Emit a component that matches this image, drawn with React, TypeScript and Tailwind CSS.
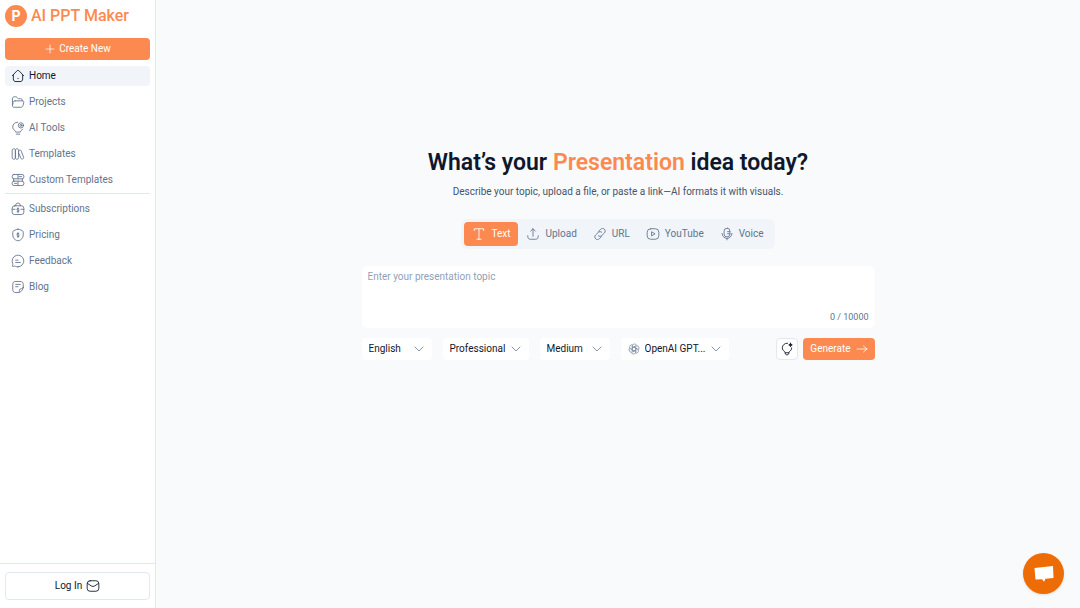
import { useState } from "react";
import type { ReactNode } from "react";

const Icon = ({
  children,
  className = "size-[14px]",
}: {
  children: ReactNode;
  className?: string;
}) => (
  <svg
    viewBox="0 0 24 24"
    fill="none"
    stroke="currentColor"
    strokeWidth="1.5"
    strokeLinecap="round"
    strokeLinejoin="round"
    className={`shrink-0 ${className}`}
    aria-hidden="true"
  >
    {children}
  </svg>
);

const dollar = (
  <path d="M12 8v8M14 10c-.4-.6-1.100-.9-2-.9-1.200 0-2 .6-2 1.500s.9 1.400 2 1.400 2 .5 2 1.400-.8 1.500-2 1.500c-.9 0-1.600-.3-2-.9" />
);

const mainLinks = [
  {
    name: "Home",
    icon: (
      <>
        <path d="M2.500 11.500 9.500 3.800c1.700-1.800 3.300-1.800 5 0l7 7.700M4 10.500V17c0 3 1.500 4.500 4.500 4.500h7c3 0 4.500-1.500 4.500-4.500v-6.500" />
        <path d="M12 16v.5" />
      </>
    ),
  },
  {
    name: "Projects",
    icon: (
      <>
        <path d="M2.500 17V7c0-2.500 1-4 3.500-4h2c1 0 1.700.5 2.300 1.300l.7 1c.5.700 1 1 1.900 1H16c2.500 0 3.500 1.200 3.500 3.700" />
        <path d="M7 10h12.500c2.200 0 2.900 1.200 2.400 3l-1.300 5c-.5 2-1.500 3-3.600 3H5.500c-2.300 0-3.400-1.300-2.900-3.500l1-4.500C4.100 11 5 10 7 10z" />
      </>
    ),
  },
  {
    name: "AI Tools",
    icon: (
      <>
        <path d="M11.500 2C6.500 2 3 5.600 3 10c0 3.300 1.600 5 3.600 6.500.9.600 1.400 1.300 1.400 2.500h8c0-1.200.5-1.900 1.400-2.500 1-.8 1.900-1.600 2.600-2.600M9 22.500h6" />
        <circle cx="17" cy="7.500" r="4.500" />
        <circle cx="17" cy="7.500" r="1.800" />
      </>
    ),
  },
  {
    name: "Templates",
    icon: (
      <>
        <path d="M2 6c0-2 .8-3 2.700-3S7.500 4 7.500 6v12c0 2-.9 3-2.800 3S2 20 2 18zM7.500 6c0-2 .9-3 2.800-3S13 4 13 6v12c0 2-.8 3-2.700 3s-2.800-1-2.800-3z" />
        <path d="M13 8c0-1.500.5-2.200 1.800-2.600 1.500-.4 2.300.2 2.800 1.800l3.900 10c.5 1.700 0 2.800-1.500 3.300s-2.500 0-3.100-1.600L13 10" />
      </>
    ),
  },
  {
    name: "Custom Templates",
    icon: (
      <>
        <rect x="2" y="2.500" width="20" height="7.500" rx="3" />
        <rect x="2" y="14" width="20" height="7.500" rx="3" />
        <path d="M14 6.200h4M6 17.800h4M12 2.500V10M12 14v7.500M4.500 10v4M19.500 10v4" />
      </>
    ),
  },
];

const moreLinks = [
  {
    name: "Subscriptions",
    icon: (
      <>
        <rect x="2" y="6.500" width="20" height="15" rx="4" />
        <path d="M8 6.500C8 3.500 9 2 12 2s4 1.500 4 4.500M2 12.500h5M17 12.500h5" />
        <g transform="translate(0 2)">{dollar}</g>
      </>
    ),
  },
  {
    name: "Pricing",
    icon: (
      <>
        <path d="M12 2c1.500 0 3 .9 5.300 1.700C20 4.600 21 5.300 21 8v4c0 5.500-4 8.200-6.700 9.400-1.600.8-3 .8-4.600 0C7 20.200 3 17.500 3 12V8c0-2.700 1-3.400 3.700-4.300C9 2.900 10.500 2 12 2z" />
        {dollar}
      </>
    ),
  },
  {
    name: "Feedback",
    icon: (
      <>
        <path d="M12 22a10 10 0 1 0-9-5.600c.2.400.3.900.2 1.400l-.7 2.400c-.2.900.3 1.400 1.200 1.200l2.400-.6c.5-.1.900 0 1.400.2 1.400.7 2.900 1 4.500 1z" />
        <path d="M8 10.500h4M8 14.500h8" />
      </>
    ),
  },
  {
    name: "Blog",
    icon: (
      <>
        <path d="M21 13V8c0-4-1.500-5.500-5.500-5.500h-7C4.500 2.500 3 4 3 8v8c0 4 1.500 5.500 5.500 5.500H13c3 0 8-4.500 8-8.500zM21 13c-1 2-2.500 2-4 2s-2.500 1-2.500 2.500 0 3-1.500 4" />
        <path d="M8 7.500h8M8 11.500h4" />
      </>
    ),
  },
];

const tabs = [
  {
    name: "Text",
    icon: <path d="M4 6V3h16v3M12 3v18M8.500 21h7" />,
  },
  {
    name: "Upload",
    icon: (
      <path d="M12 16V3M8 7l4-4 4 4M3 15c0 4.500 1 6 5 6h8c4 0 5-1.500 5-6" />
    ),
  },
  {
    name: "URL",
    icon: (
      <>
        <path d="m9.500 7.500 3.300-3.300c2.100-2.100 4.800-2.300 6.500-.6 1.900 1.900 2.300 4.600.2 6.700l-4.300 4.200c-2 2-4.600 2-6.200.5" />
        <path d="m14.500 16.500-3.300 3.300c-2.100 2.100-4.800 2.300-6.500.6-1.900-1.900-2.300-4.600-.2-6.700l4.300-4.200c2-2 4.600-2 6.200-.5" />
      </>
    ),
  },
  {
    name: "YouTube",
    icon: (
      <>
        <rect x="2" y="3" width="20" height="18" rx="6" />
        <path d="M9.500 8.800v6.400l5.500-3.200z" />
      </>
    ),
  },
  {
    name: "Voice",
    icon: (
      <>
        <rect x="7" y="2" width="10" height="15" rx="5" />
        <path d="M3.500 11a8.500 8.500 0 0 0 17 0M12 19.500V22M13 8h4M13 11.500h4" />
      </>
    ),
  },
];

const SideLink = ({
  name,
  icon,
  active,
}: {
  name: string;
  icon: ReactNode;
  active?: boolean;
}) => (
  <a
    href="#"
    className={
      active
        ? "flex h-5 items-center gap-1 rounded bg-slate-100 px-[6px] text-slate-900"
        : "flex h-5 items-center gap-1 rounded px-[6px] text-slate-500"
    }
  >
    <Icon>{icon}</Icon>
    {name}
  </a>
);

const Picker = ({
  label,
  value,
  width,
  icon,
}: {
  label: string;
  value: string;
  width: string;
  icon?: ReactNode;
}) => (
  <div
    className={`relative flex h-[22px] items-center rounded bg-white ${width}`}
  >
    {icon}
    <select
      aria-label={label}
      className={`h-full w-full appearance-none bg-transparent text-slate-900 outline-none ${
        icon ? "pl-6" : "pl-[7px]"
      }`}
    >
      <option>{value}</option>
    </select>
    <Icon className="pointer-events-none absolute right-[7px] size-3 text-slate-500">
      <path d="m4 8 8 8 8-8" />
    </Icon>
  </div>
);

const App = () => {
  const [tab, setTab] = useState("Text");
  const [topic, setTopic] = useState("");

  return (
    <div className="flex min-h-screen bg-slate-50 font-[Roboto,sans-serif] text-[10px] leading-4 text-slate-500">
      {/* Sidebar */}
      <aside className="flex w-[156px] shrink-0 flex-col border-r border-slate-200 bg-white">
        <a
          href="#"
          className="mt-[5px] flex items-center gap-1 px-[5px] text-base leading-[22px] font-medium text-[#fc8a50]"
        >
          <span className="flex size-[22px] items-center justify-center rounded-full bg-[#fc8a50] font-[Inter,sans-serif] text-sm font-bold text-white">
            P
          </span>
          AI PPT Maker
        </a>

        <div className="mt-[11px] px-[5px]">
          <button className="flex h-[22px] w-full items-center justify-center gap-[3px] rounded bg-[#fc8a50] text-white">
            <Icon className="size-3">
              <path d="M12 4v16M4 12h16" />
            </Icon>
            Create New
          </button>
        </div>

        <nav className="mt-[6px] px-[5px]">
          <div className="flex flex-col gap-[6px]">
            {mainLinks.map((link) => (
              <SideLink key={link.name} {...link} active={link.name === "Home"} />
            ))}
          </div>
          <hr className="mt-[3px] mb-[5px] border-slate-200" />
          <div className="flex flex-col gap-[6px]">
            {moreLinks.map((link) => (
              <SideLink key={link.name} {...link} />
            ))}
          </div>
        </nav>

        <div className="mt-auto border-t border-slate-200 px-[5px] py-2">
          <button className="flex h-7 w-full items-center justify-center gap-1 rounded border border-slate-200 text-slate-900">
            Log In
            <Icon>
              <rect x="2" y="3" width="20" height="18" rx="5" />
              <path d="m2.500 7.500 6 4c2.500 1.600 4.500 1.600 7 0l6-4" />
            </Icon>
          </button>
        </div>
      </aside>

      {/* Generator */}
      <main className="flex flex-1 flex-col items-center px-4 pt-[147px]">
        <h1 className="text-center text-[23px] leading-8 font-semibold text-slate-900">
          What’s your <span className="text-[#fc8a50]">Presentation</span> idea
          today?
        </h1>
        <p className="mt-[5px] text-center text-slate-600">
          Describe your topic, upload a file, or paste a link—AI formats it with
          visuals.
        </p>

        <div className="mt-[19px] flex rounded-md bg-slate-100 p-[3px]">
          {tabs.map((item) => (
            <button
              key={item.name}
              onClick={() => setTab(item.name)}
              className={
                tab === item.name
                  ? "flex h-6 items-center gap-[5px] rounded bg-[#fc8a50] px-2 text-white"
                  : "flex h-6 items-center gap-[5px] rounded px-2 text-slate-500"
              }
            >
              <Icon>{item.icon}</Icon>
              {item.name}
            </button>
          ))}
        </div>

        <form
          className="mt-[17px] w-full max-w-[513px]"
          onSubmit={(e) => e.preventDefault()}
        >
          <div className="rounded-md bg-white px-[6px] py-[3px]">
            <textarea
              aria-label="Presentation topic"
              placeholder="Enter your presentation topic"
              maxLength={10000}
              value={topic}
              onChange={(e) => setTopic(e.target.value)}
              className="block h-10 w-full resize-none bg-transparent text-slate-900 outline-none placeholder:text-slate-400"
            />
            <div className="text-right text-[9px]">{topic.length} / 10000</div>
          </div>

          <div className="mt-[10px] flex gap-[11px]">
            <Picker label="Language" value="English" width="w-[70px]" />
            <Picker label="Tone" value="Professional" width="w-[86px]" />
            <Picker label="Length" value="Medium" width="w-[70px]" />
            <Picker
              label="Model"
              value="OpenAI GPT..."
              width="w-[108px]"
              icon={
                <Icon className="pointer-events-none absolute left-[7px] size-3 opacity-80">
                  {[0, 60, 120, 180, 240, 300].map((angle) => (
                    <path
                      key={angle}
                      transform={`rotate(${angle} 12 12)`}
                      d="M8.500 14V6.500a4.800 4.800 0 0 1 9-2.200M8.500 10l6.500-3.700"
                    />
                  ))}
                </Icon>
              }
            />
            <div className="ml-auto flex gap-[5px]">
              <button
                type="button"
                aria-label="Suggest a topic"
                className="flex size-[22px] items-center justify-center rounded border border-slate-200 bg-white text-slate-900"
              >
                <Icon>
                  <path d="M13 2C7.500 2 4 5.500 4 10c0 3 1.500 4.700 3.400 6 1 .7 1.600 1.500 1.600 3 0 2 1 3 3 3s3-1 3-3c0-1.500.6-2.300 1.600-3 2-1.300 3.400-3 3.400-6M9 18.500h6" />
                  <path
                    fill="currentColor"
                    d="m18 2 .8 2.200L21 5l-2.200.8L18 8l-.8-2.200L15 5l2.200-.8z"
                  />
                </Icon>
              </button>
              <button className="flex h-[22px] items-center gap-[5px] rounded bg-[#fc8a50] px-[7px] text-white">
                Generate
                <Icon className="size-3">
                  <path d="M2 12h20M15 6l7 6-7 6" />
                </Icon>
              </button>
            </div>
          </div>
        </form>
      </main>

      <button
        aria-label="Open chat"
        className="fixed right-4 bottom-[14px] flex size-[41px] items-center justify-center rounded-full bg-[#ee6c05] text-white shadow-sm"
      >
        <svg viewBox="0 0 20 16" className="h-4 w-5" fill="currentColor" aria-hidden="true">
          <path d="M.5 2 19 0l.5 12-8 .7-1.500 3-2-2.500-6.500.4z" />
        </svg>
      </button>
    </div>
  );
};

export default App;
